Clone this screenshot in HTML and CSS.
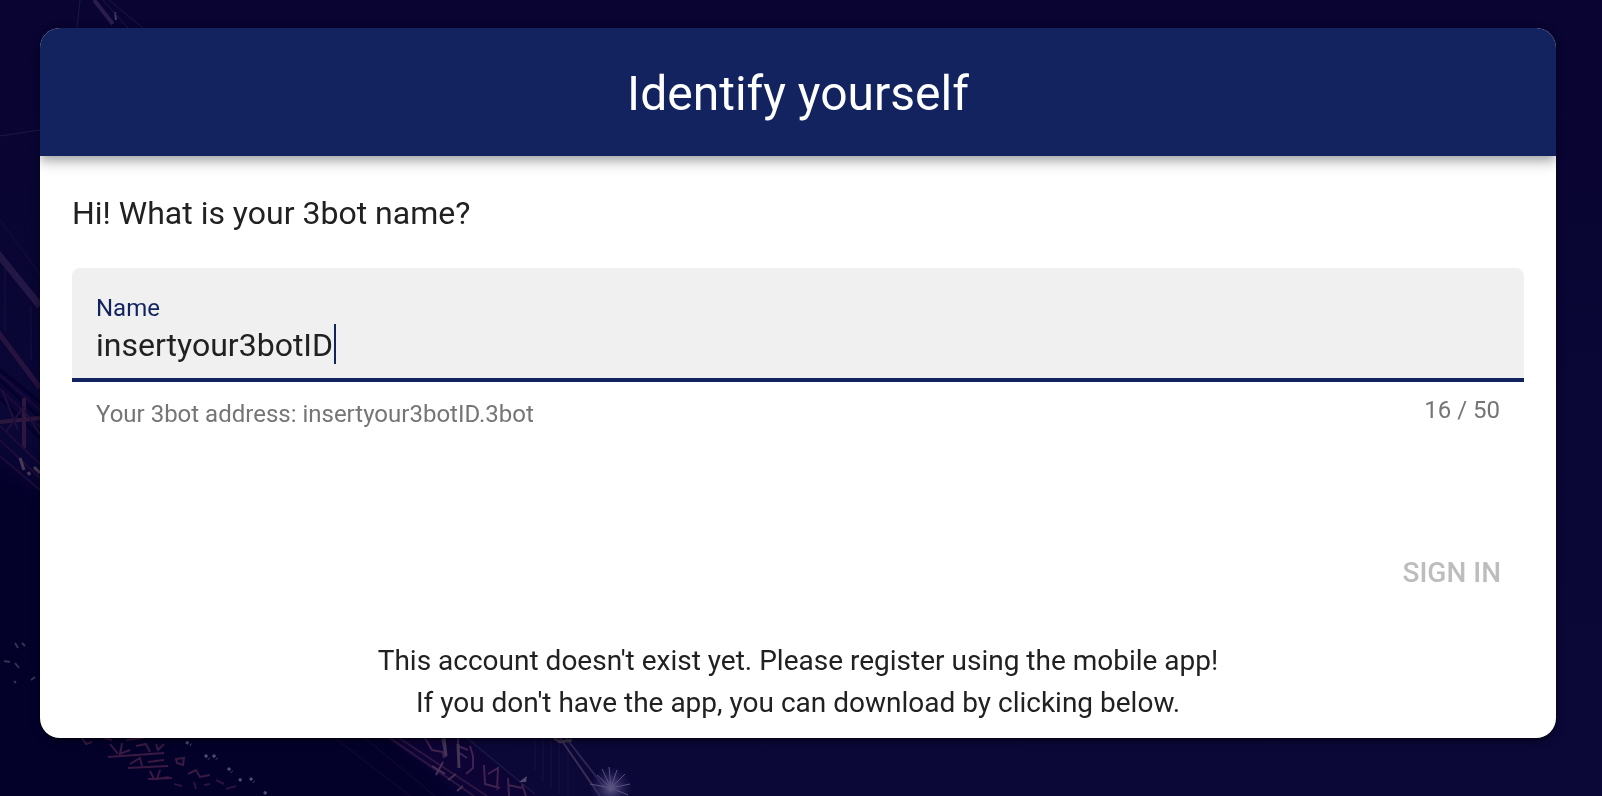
FILE: index.html
```html
<!DOCTYPE html>
<html lang="en">
<head>
<meta charset="utf-8">
<meta name="viewport" content="width=device-width, initial-scale=1">
<title>Identify yourself</title>
<link rel="stylesheet" href="styles.css">
</head>
<body>
<svg class="backdrop" viewBox="0 0 1602 796" preserveAspectRatio="xMinYMax slice" aria-hidden="true">
  <defs>
    <linearGradient id="sky" x1="0" y1="0" x2="0" y2="1">
      <stop offset="0" stop-color="#090431"/>
      <stop offset="0.5" stop-color="#0a0635"/>
      <stop offset="1" stop-color="#0b0838"/>
    </linearGradient>
    <radialGradient id="glow">
      <stop offset="0" stop-color="#686394"/>
      <stop offset="0.25" stop-color="#484274" stop-opacity="0.9"/>
      <stop offset="1" stop-color="#1d1650" stop-opacity="0"/>
    </radialGradient>
    <filter id="soft" x="0" y="0" width="1" height="1" color-interpolation-filters="sRGB">
      <feGaussianBlur stdDeviation="0.7"/>
    </filter>
    <filter id="haze" color-interpolation-filters="sRGB">
      <feGaussianBlur stdDeviation="12"/>
    </filter>
  </defs>
  <rect width="1602" height="796" fill="url(#sky)"/>
  <path d="M-40 440L60 500L380 700L500 840H-40Z" fill="#03002a" filter="url(#haze)"/>
  <g filter="url(#soft)">
    <rect width="1602" height="796" fill="none"/>
    <g fill="none" stroke="#2a1d4d">
      <path d="M94 0L113 24" stroke-width="4"/>
      <path d="M115 12L116 20" stroke="#453a66" stroke-width="2"/>
      <path d="M103 0L128 28M109 0L143 28M80 0L77 28M0 136L40 130" stroke="#21164a"/>
      <path d="M0 220L40 274M5 268V330M31 306V360" stroke="#17103f"/>
      <path d="M-2 254L40 306" stroke="#231845" stroke-width="7"/>
      <path d="M-2 332L40 388" stroke="#27133f" stroke-width="5"/>
      <path d="M0 370L40 402M0 380L40 418M0 398L40 438" stroke="#04002b" stroke-width="3"/>
      <path d="M0 375L40 410M0 389L40 427" stroke="#1b0b39" stroke-width="2"/>
      <path d="M0 422L40 418" stroke="#2e173f" stroke-width="4"/>
      <path d="M24 398V448" stroke="#2e173f" stroke-width="4"/>
      <path d="M2 390L18 430M6 432L24 406M24 410L40 434" stroke="#21103c" stroke-width="2"/>
      <path d="M0 426L40 464M0 440L40 478M0 456L40 490" stroke="#1c0c38" stroke-width="2"/>
      <path d="M20 458L24 470M28 472L30 475M34 467L40 473" stroke="#483a55" stroke-width="3"/>
      <path d="M15 643L18 648M22 643L25 646M15 663L19 668M4 661L10 662M14 681L16 683M31 680L35 677" stroke="#39304f" stroke-width="2"/>
    </g>
    <g fill="none" stroke="#3a1a40" stroke-width="2">
      <path d="M82 738L86 744L92 742M104 738L112 740M126 740L143 738"/>
      <path d="M110 744L118 754M122 743L120 754L130 750M136 746L146 744L150 752M156 744L158 750L164 744M108 757L164 753"/>
      <path d="M130 764L140 758L142 766M148 762L164 760M176 759L184 758L183 765L177 763ZM128 768L168 766"/>
      <path d="M150 771L154 779M160 770L157 779L169 777M188 774L196 770L200 777L210 775M148 779L172 778"/>
      <path d="M174 784L182 786M194 782L196 789M204 785L210 784M216 780L224 784M226 789L236 786" stroke="#2a133c"/>
    </g>
    <path d="M186 742L191 745M205 755L209 759M213 755L217 759M228 768L232 772M239 779L243 782M250 778L254 782M264 792L268 795" fill="none" stroke="#504a70" stroke-width="3" stroke-dasharray="3 2"/>
    <path d="M335 738L410 796M365 738L435 796" stroke="#180a36" fill="none"/>
    <path d="M385 738H462L535 796H470Z" fill="#0d0335"/>
    <g fill="none" stroke="#3e234f" stroke-width="2">
      <path d="M390 738L474 796M399 738L487 796" stroke="#2c1642"/>
      <path d="M425 738L432 750L443 752L444 758M442 739L446 757M458 738V752L467 758M458 746L468 750M470 746L473 756V768L466 774M484 765L485 784L500 788M488 774L498 768L497 790M508 778L509 796M508 785L522 788M522 784L526 796"/>
      <path d="M432 766L445 774M436 775L443 762M448 780L456 774M457 791L463 786" stroke="#4a2e53"/>
      <path d="M444 738L446 756M458 744L459 768" stroke="#423652" stroke-width="3"/>
    </g>
    <path d="M467 738L535 794" stroke="#29204a" fill="none"/>
    <path d="M519 782L527 776L526 782Z" fill="#51496c"/>
    <path d="M535 738V770M543 738V782M551 738V788M559 738V794M568 738V796" stroke="#171044" fill="none"/>
    <g fill="none" stroke="#392e55">
      <path d="M560 738L600 796" stroke-width="2"/>
      <path d="M566 738L605 788" stroke="#2f2650" stroke-width="2"/>
      <path d="M554 738L560 742L572 740" stroke="#40344d" stroke-width="3"/>
    </g>
    <circle cx="611" cy="788" r="22" fill="url(#glow)"/>
    <path d="M611 788L609 767M611 788L617 770M611 788L625 774M611 788L630 784M611 788L628 795M611 788L590 784M611 788L597 775M611 788L602 769" stroke="#59527d"/>
  </g>
</svg>
<main class="page">
  <form class="card">
    <header class="card-header">
      <h1 class="title">Identify yourself</h1>
    </header>
    <div class="card-body">
      <p class="question">Hi! What is your 3bot name?</p>
      <div class="field">
        <label class="field-label" for="name">Name</label>
        <div class="field-entry">
          <input class="field-input" id="name" type="text" value="insertyour3botID" maxlength="50" autocomplete="off" spellcheck="false" aria-describedby="hint">
          <span class="caret"></span>
        </div>
      </div>
      <div class="details">
        <span class="hint" id="hint">Your 3bot address: insertyour3botID.3bot</span>
        <span class="counter">16 / 50</span>
      </div>
      <div class="actions">
        <button class="sign-in" type="submit" disabled>SIGN IN</button>
      </div>
      <p class="notice">This account doesn't exist yet. Please register using the mobile app!<br>If you don't have the app, you can download by clicking below.</p>
    </div>
  </form>
</main>
</body>
</html>
```
FILE: styles.css
```css
* {
  box-sizing: border-box;
}

body {
  margin: 0;
  min-height: 100vh;
  background: #0a0635;
  color: #212121;
  font-family: Roboto, "Liberation Sans", sans-serif;
}

.backdrop {
  position: fixed;
  inset: 0;
  width: 100%;
  height: 100%;
}

.page {
  position: relative;
  padding: 28px 46px 28px 40px;
}

.card {
  overflow: hidden;
  border-radius: 20px;
  background: #fff;
  box-shadow: 0 6px 2px -4px rgba(0, 0, 0, 0.2), 0 4px 4px rgba(0, 0, 0, 0.14), 0 2px 10px rgba(0, 0, 0, 0.4);
}

.card-header {
  padding: 34px 32px 30px;
  background: #12235f;
  color: #fff;
  text-align: center;
  box-shadow: 0 4px 8px -2px rgba(0, 0, 0, 0.2), 0 8px 10px rgba(0, 0, 0, 0.14), 0 2px 20px rgba(0, 0, 0, 0.12);
}

.title {
  margin: 0;
  font-size: 48px;
  font-weight: 400;
  line-height: 64px;
}

.card-body {
  padding: 32px 32px 14px;
}

.question {
  margin: 0 0 30px;
  font-size: 32px;
  line-height: 50px;
}

.field {
  padding: 24px 24px 12px;
  border-bottom: 4px solid #12235f;
  border-radius: 8px 8px 0 0;
  background: #f0f0f0;
}

.field-label {
  display: block;
  color: #12235f;
  font-size: 24px;
  line-height: 32px;
}

.field-entry {
  display: flex;
}

.field-input {
  field-sizing: content;
  max-width: 100%;
  height: 42px;
  padding: 0;
  border: 0;
  outline: 0;
  background: transparent;
  color: #212121;
  caret-color: transparent;
  font: 32px/42px Roboto, "Liberation Sans", sans-serif;
}

.caret {
  width: 2px;
  height: 40px;
  margin-left: 1px;
  background: #12235f;
}

.details {
  display: flex;
  justify-content: space-between;
  align-items: flex-start;
  padding: 16px 24px 0;
  color: #757575;
  font-size: 24px;
}

.hint {
  line-height: 32px;
}

.counter {
  line-height: 24px;
}

.actions {
  display: flex;
  justify-content: flex-end;
  padding: 107px 0 31px;
}

.sign-in {
  height: 72px;
  padding: 0 23px;
  border: 0;
  background: transparent;
  color: #bdbdbd;
  font: 500 28px/40px Roboto, "Liberation Sans", sans-serif;
}

.notice {
  margin: 0;
  font-size: 28px;
  line-height: 42px;
  text-align: center;
}
```
